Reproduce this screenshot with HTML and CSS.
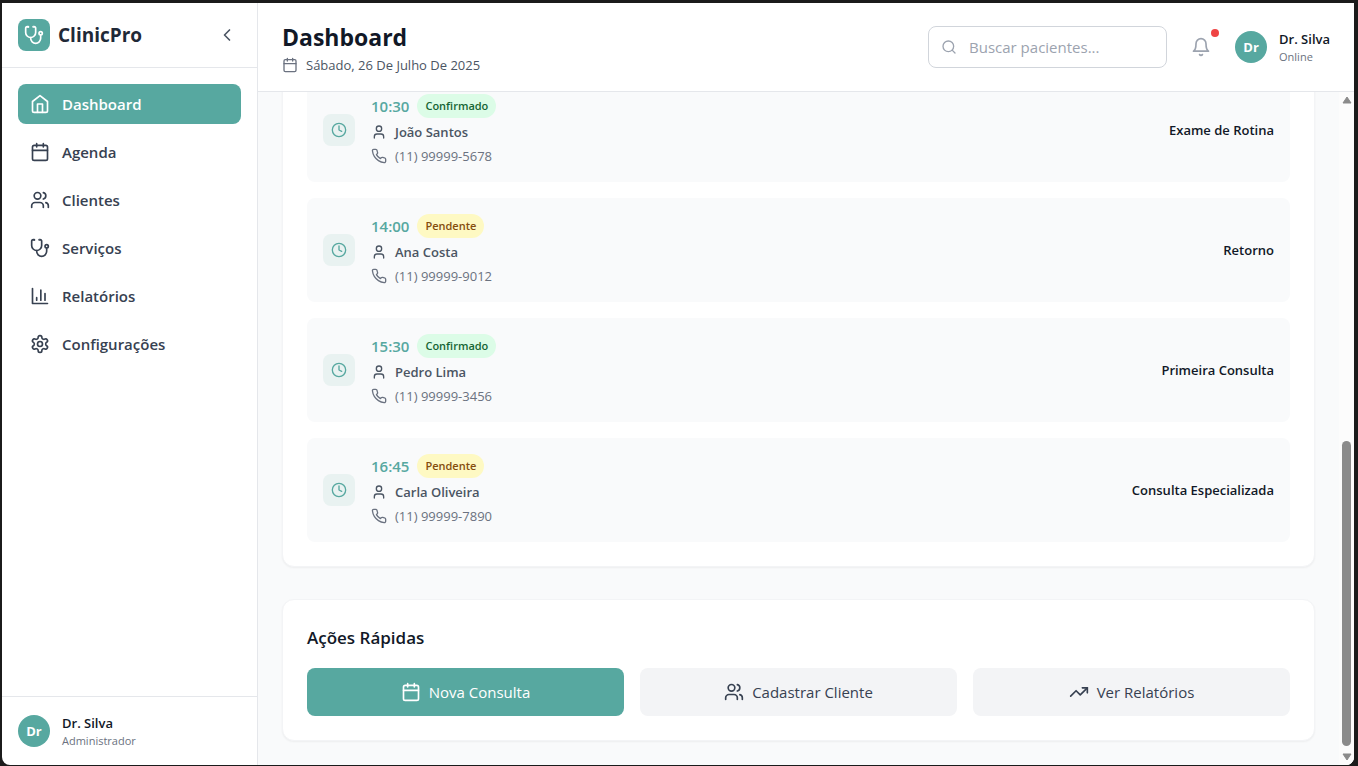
FILE: index.html
```html
<!DOCTYPE html>
<html lang="pt-BR">
<head>
<meta charset="utf-8">
<meta name="viewport" content="width=device-width, initial-scale=1">
<title>ClinicPro - Dashboard</title>
<link rel="stylesheet" href="styles.css">
</head>
<body>
<svg class="sprite" aria-hidden="true">
  <symbol id="i-stethoscope" viewBox="0 0 24 24"><path d="M4.8 2.3A.3.3 0 1 0 5 2H4a2 2 0 0 0-2 2v5a6 6 0 0 0 6 6 6 6 0 0 0 6-6V4a2 2 0 0 0-2-2h-1a.2.2 0 1 0 .3.3"/><path d="M8 15v1a6 6 0 0 0 6 6 6 6 0 0 0 6-6v-4"/><circle cx="20" cy="10" r="2"/></symbol>
  <symbol id="i-chevron" viewBox="0 0 24 24"><path d="m15 18-6-6 6-6"/></symbol>
  <symbol id="i-home" viewBox="0 0 24 24"><path d="m3 9 9-7 9 7v11a2 2 0 0 1-2 2H5a2 2 0 0 1-2-2z"/><path d="M9 22V12h6v10"/></symbol>
  <symbol id="i-calendar" viewBox="0 0 24 24"><rect x="3" y="4" width="18" height="18" rx="2"/><path d="M16 2v4M8 2v4M3 10h18"/></symbol>
  <symbol id="i-users" viewBox="0 0 24 24"><path d="M16 21v-2a4 4 0 0 0-4-4H6a4 4 0 0 0-4 4v2"/><circle cx="9" cy="7" r="4"/><path d="M22 21v-2a4 4 0 0 0-3-3.87"/><path d="M16 3.13a4 4 0 0 1 0 7.75"/></symbol>
  <symbol id="i-chart" viewBox="0 0 24 24"><path d="M3 3v18h18M18 17V9M13 17V5M8 17v-3"/></symbol>
  <symbol id="i-settings" viewBox="0 0 24 24"><path d="M12.22 2h-.44a2 2 0 0 0-2 2v.18a2 2 0 0 1-1 1.73l-.43.25a2 2 0 0 1-2 0l-.15-.08a2 2 0 0 0-2.73.73l-.22.38a2 2 0 0 0 .73 2.73l.15.1a2 2 0 0 1 1 1.72v.51a2 2 0 0 1-1 1.74l-.15.09a2 2 0 0 0-.73 2.73l.22.38a2 2 0 0 0 2.73.73l.15-.08a2 2 0 0 1 2 0l.43.25a2 2 0 0 1 1 1.73V20a2 2 0 0 0 2 2h.44a2 2 0 0 0 2-2v-.18a2 2 0 0 1 1-1.73l.43-.25a2 2 0 0 1 2 0l.15.08a2 2 0 0 0 2.73-.73l.22-.39a2 2 0 0 0-.73-2.73l-.15-.08a2 2 0 0 1-1-1.74v-.5a2 2 0 0 1 1-1.74l.15-.09a2 2 0 0 0 .73-2.73l-.22-.38a2 2 0 0 0-2.73-.73l-.15.08a2 2 0 0 1-2 0l-.43-.25a2 2 0 0 1-1-1.73V4a2 2 0 0 0-2-2z"/><circle cx="12" cy="12" r="3"/></symbol>
  <symbol id="i-search" viewBox="0 0 24 24"><circle cx="11" cy="11" r="8"/><path d="m21 21-4.3-4.3"/></symbol>
  <symbol id="i-bell" viewBox="0 0 24 24"><path d="M6 8a6 6 0 0 1 12 0c0 7 3 9 3 9H3s3-2 3-9"/><path d="M10.3 21a1.94 1.94 0 0 0 3.4 0"/></symbol>
  <symbol id="i-clock" viewBox="0 0 24 24"><circle cx="12" cy="12" r="10"/><path d="M12 6v6l4 2"/></symbol>
  <symbol id="i-user" viewBox="0 0 24 24"><path d="M19 21v-2a4 4 0 0 0-4-4H9a4 4 0 0 0-4 4v2"/><circle cx="12" cy="7" r="4"/></symbol>
  <symbol id="i-phone" viewBox="0 0 24 24"><path d="M22 16.92v3a2 2 0 0 1-2.18 2 19.79 19.79 0 0 1-8.63-3.07 19.5 19.5 0 0 1-6-6 19.79 19.79 0 0 1-3.07-8.67A2 2 0 0 1 4.11 2h3a2 2 0 0 1 2 1.72 12.84 12.84 0 0 0 .7 2.81 2 2 0 0 1-.45 2.11L8.09 9.91a16 16 0 0 0 6 6l1.27-1.27a2 2 0 0 1 2.11-.45 12.84 12.84 0 0 0 2.81.7A2 2 0 0 1 22 16.92z"/></symbol>
  <symbol id="i-trend" viewBox="0 0 24 24"><path d="m22 7-8.500 8.500-5-5L2 17"/><path d="M16 7h6v6"/></symbol>
</svg>

<div class="app">
  <aside class="sidebar">
    <div class="brand">
      <span class="brand-logo"><svg class="icon"><use href="#i-stethoscope"/></svg></span>
      <span class="brand-name">ClinicPro</span>
      <button class="collapse" type="button" aria-label="Recolher menu"><svg class="icon"><use href="#i-chevron"/></svg></button>
    </div>
    <nav class="nav">
      <a class="nav-item active" href="#" aria-current="page"><svg class="icon"><use href="#i-home"/></svg>Dashboard</a>
      <a class="nav-item" href="#"><svg class="icon"><use href="#i-calendar"/></svg>Agenda</a>
      <a class="nav-item" href="#"><svg class="icon"><use href="#i-users"/></svg>Clientes</a>
      <a class="nav-item" href="#"><svg class="icon"><use href="#i-stethoscope"/></svg>Serviços</a>
      <a class="nav-item" href="#"><svg class="icon"><use href="#i-chart"/></svg>Relatórios</a>
      <a class="nav-item" href="#"><svg class="icon"><use href="#i-settings"/></svg>Configurações</a>
    </nav>
    <div class="account profile">
      <span class="avatar">Dr</span>
      <div><div class="profile-name">Dr. Silva</div><div class="profile-note">Administrador</div></div>
    </div>
  </aside>

  <div class="page">
    <header class="topbar">
      <div class="heading">
        <h1>Dashboard</h1>
        <p class="date"><svg class="icon small"><use href="#i-calendar"/></svg>Sábado, 26 De Julho De 2025</p>
      </div>
      <label class="search">
        <svg class="icon small"><use href="#i-search"/></svg>
        <input type="text" placeholder="Buscar pacientes..." aria-label="Buscar pacientes">
      </label>
      <button class="bell" type="button" aria-label="Notificações"><svg class="icon"><use href="#i-bell"/></svg><span class="dot"></span></button>
      <div class="profile">
        <span class="avatar">Dr</span>
        <div><div class="profile-name">Dr. Silva</div><div class="profile-note">Online</div></div>
      </div>
    </header>

    <div class="body">
      <main class="scroller">
        <div class="content">
          <section class="card appointments" aria-label="Consultas">
            <article class="appointment">
              <span class="clock"><svg class="icon small"><use href="#i-clock"/></svg></span>
              <div class="details">
                <div class="line"><time class="time">10:30</time><span class="badge confirmed">Confirmado</span></div>
                <div class="line patient"><svg class="icon small"><use href="#i-user"/></svg>João Santos</div>
                <div class="line phone"><svg class="icon small"><use href="#i-phone"/></svg>(11) 99999-5678</div>
              </div>
              <span class="service">Exame de Rotina</span>
            </article>
            <article class="appointment">
              <span class="clock"><svg class="icon small"><use href="#i-clock"/></svg></span>
              <div class="details">
                <div class="line"><time class="time">14:00</time><span class="badge pending">Pendente</span></div>
                <div class="line patient"><svg class="icon small"><use href="#i-user"/></svg>Ana Costa</div>
                <div class="line phone"><svg class="icon small"><use href="#i-phone"/></svg>(11) 99999-9012</div>
              </div>
              <span class="service">Retorno</span>
            </article>
            <article class="appointment">
              <span class="clock"><svg class="icon small"><use href="#i-clock"/></svg></span>
              <div class="details">
                <div class="line"><time class="time">15:30</time><span class="badge confirmed">Confirmado</span></div>
                <div class="line patient"><svg class="icon small"><use href="#i-user"/></svg>Pedro Lima</div>
                <div class="line phone"><svg class="icon small"><use href="#i-phone"/></svg>(11) 99999-3456</div>
              </div>
              <span class="service">Primeira Consulta</span>
            </article>
            <article class="appointment">
              <span class="clock"><svg class="icon small"><use href="#i-clock"/></svg></span>
              <div class="details">
                <div class="line"><time class="time">16:45</time><span class="badge pending">Pendente</span></div>
                <div class="line patient"><svg class="icon small"><use href="#i-user"/></svg>Carla Oliveira</div>
                <div class="line phone"><svg class="icon small"><use href="#i-phone"/></svg>(11) 99999-7890</div>
              </div>
              <span class="service">Consulta Especializada</span>
            </article>
          </section>

          <section class="card">
            <h2>Ações Rápidas</h2>
            <div class="actions">
              <button class="action primary" type="button"><svg class="icon"><use href="#i-calendar"/></svg>Nova Consulta</button>
              <button class="action" type="button"><svg class="icon"><use href="#i-users"/></svg>Cadastrar Cliente</button>
              <button class="action" type="button"><svg class="icon"><use href="#i-trend"/></svg>Ver Relatórios</button>
            </div>
          </section>
        </div>
      </main>
      <div class="scrollbar" aria-hidden="true">
        <svg class="arrow" viewBox="0 0 10 8"><path d="M5 1 9 7H1z"/></svg>
        <div class="track"><div class="thumb"></div></div>
        <svg class="arrow" viewBox="0 0 10 8"><path d="M5 7 1 1h8z"/></svg>
      </div>
    </div>
  </div>
</div>
</body>
</html>
```

FILE: styles.css
```css
:root {
  --teal: #57a8a0;
  --ink: #111827;
  --text: #374151;
  --muted: #6b7280;
  --line: #e5e7eb;
  --surface: #f9fafb;
}

* { box-sizing: border-box; }

body {
  margin: 0;
  height: 100vh;
  padding: 3px 4px 1px 2px;
  background: #1b1b1b;
  color: var(--ink);
  font-family: "Open Sans", "Noto Sans", sans-serif;
  font-size: 15px;
  line-height: 24px;
}

h1, h2, p { margin: 0; }
button { border: 0; padding: 0; background: none; color: inherit; font: inherit; cursor: pointer; }
.sprite { display: none; }

.icon {
  flex: none;
  display: block;
  width: 20px;
  height: 20px;
  fill: none;
  stroke: currentColor;
  stroke-width: 2;
  stroke-linecap: round;
  stroke-linejoin: round;
}
.icon.small { width: 16px; height: 16px; }

.app {
  display: flex;
  height: 100%;
  overflow: hidden;
  border-radius: 0 0 8px 8px;
  background: #fff;
}

/* Sidebar */
.sidebar {
  flex: none;
  display: flex;
  flex-direction: column;
  width: 256px;
  border-right: 1px solid var(--line);
}
.brand {
  display: flex;
  align-items: center;
  gap: 8px;
  padding: 16px;
  border-bottom: 1px solid var(--line);
}
.brand-logo {
  display: grid;
  place-items: center;
  width: 32px;
  height: 32px;
  border-radius: 8px;
  background: var(--teal);
  color: #fff;
}
.brand-name { flex: 1; color: #1f2937; font-size: 19px; font-weight: 700; }
.collapse { padding: 4px; color: #4b5563; }
.nav {
  flex: 1;
  display: flex;
  flex-direction: column;
  gap: 8px;
  padding: 16px;
}
.nav-item {
  display: flex;
  align-items: center;
  gap: 12px;
  padding: 8px 12px;
  border-radius: 8px;
  color: var(--text);
  font-weight: 600;
  text-decoration: none;
}
.nav-item.active { background: var(--teal); color: #fff; }
.account { padding: 16px; border-top: 1px solid var(--line); }

.profile { display: flex; align-items: center; gap: 12px; }
.avatar {
  display: grid;
  place-items: center;
  width: 32px;
  height: 32px;
  border-radius: 50%;
  background: var(--teal);
  color: #fff;
  font-size: 13px;
  font-weight: 700;
}
.profile-name { font-size: 13px; font-weight: 600; line-height: 20px; }
.profile-note { color: var(--muted); font-size: 11px; line-height: 16px; }

/* Top bar */
.page { flex: 1; display: flex; flex-direction: column; min-width: 0; }
.topbar {
  display: flex;
  align-items: center;
  padding: 16px 24px;
  border-bottom: 1px solid var(--line);
}
.heading { flex: 1; }
h1 { font-size: 23px; font-weight: 700; line-height: 36px; }
.date {
  display: flex;
  align-items: center;
  gap: 8px;
  color: #4b5563;
  font-size: 13px;
  line-height: 20px;
}
.date .icon { color: var(--muted); }
.search {
  display: flex;
  align-items: center;
  gap: 12px;
  width: 239px;
  height: 42px;
  padding: 0 12px;
  border: 1px solid #d1d5db;
  border-radius: 8px;
  color: #9ca3af;
}
.search input {
  flex: 1;
  min-width: 0;
  padding: 0;
  border: 0;
  outline: 0;
  background: none;
  color: var(--ink);
  font: inherit;
}
.search input::placeholder { color: #9ca3af; opacity: 1; }
.bell { position: relative; margin: 0 24px; color: #9ca3af; }
.dot {
  position: absolute;
  top: -8px;
  right: -8px;
  width: 8px;
  height: 8px;
  border-radius: 50%;
  background: #ef4444;
}

/* Scrolling area; reversed so that it opens at its end */
.body { flex: 1; display: flex; min-height: 0; background: var(--surface); }
.scroller {
  flex: 1;
  display: flex;
  flex-direction: column-reverse;
  min-width: 0;
  overflow-y: auto;
  scrollbar-width: none;
}
.content { flex: none; display: grid; gap: 32px; padding: 24px; }
.scrollbar {
  flex: none;
  display: flex;
  flex-direction: column;
  align-items: center;
  gap: 7px;
  width: 15px;
  padding: 4px 0;
  background: #fcfcfc;
}
.arrow { width: 10px; height: 8px; fill: #8b8b8b; stroke: #8b8b8b; stroke-linejoin: round; }
.track { flex: 1; display: flex; align-items: flex-end; }
.thumb { width: 9px; height: 48%; border-radius: 5px; background: #8b8b8b; }

.card {
  padding: 24px;
  border: 1px solid #f3f4f6;
  border-radius: 12px;
  background: #fff;
  box-shadow: 0 1px 2px rgba(0, 0, 0, 0.05);
}
.appointments { display: grid; gap: 16px; }
.appointment {
  display: flex;
  align-items: center;
  gap: 16px;
  padding: 16px;
  border-radius: 8px;
  background: var(--surface);
}
.clock {
  display: grid;
  place-items: center;
  width: 32px;
  height: 32px;
  border-radius: 8px;
  background: #e9f2f1;
  color: var(--teal);
}
.details { flex: 1; display: grid; gap: 4px; }
.line { display: flex; align-items: center; gap: 8px; }
.time { color: var(--teal); font-weight: 600; }
.badge {
  padding: 4px 8px;
  border-radius: 12px;
  font-size: 11px;
  font-weight: 600;
  line-height: 16px;
}
.confirmed { background: #dcfce7; color: #166534; }
.pending { background: #fef9c3; color: #854d0e; }
.patient { color: #4b5563; font-size: 13px; font-weight: 600; line-height: 20px; }
.phone { color: var(--muted); font-size: 13px; line-height: 20px; }
.service { font-size: 13px; font-weight: 600; }

h2 { margin-bottom: 16px; font-size: 17px; font-weight: 600; line-height: 28px; }
.actions { display: grid; grid-template-columns: repeat(3, 1fr); gap: 16px; }
.action {
  display: flex;
  align-items: center;
  justify-content: center;
  gap: 8px;
  padding: 12px;
  border-radius: 8px;
  background: #f3f4f6;
  color: var(--text);
}
.action.primary { background: var(--teal); color: #fff; }
```
